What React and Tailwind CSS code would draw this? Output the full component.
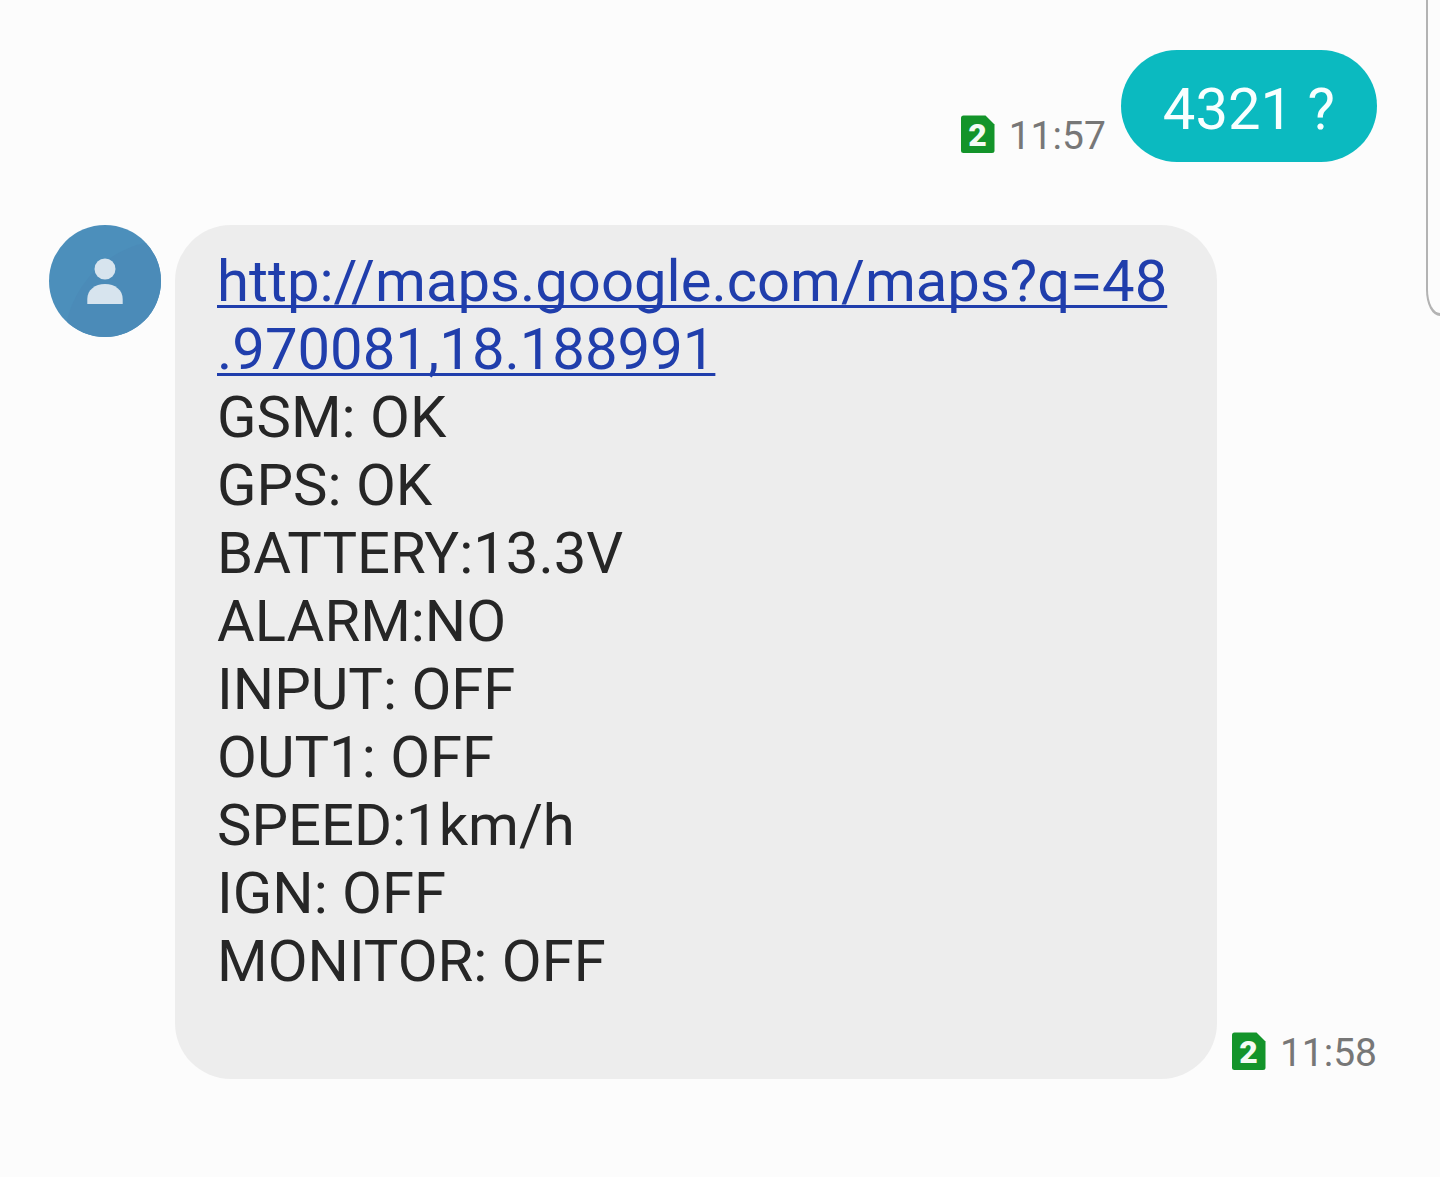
import React from "react";

const status = [
  "GSM: OK",
  "GPS: OK",
  "BATTERY:13.3V",
  "ALARM:NO",
  "INPUT: OFF",
  "OUT1: OFF",
  "SPEED:1km/h",
  "IGN: OFF",
  "MONITOR: OFF",
];

const SimIcon = () => (
  <svg width="34" height="38" viewBox="0 0 34 38" role="img" aria-label="SIM 2">
    <path d="M2.5 0.5H24.5L33.5 9.5V35.5Q33.5 38 31 38H2.5Q0 38 0 35.5V3Q0 0.5 2.5 0.5Z" fill="#13942a" />
    <text
      x="16.5"
      y="31"
      textAnchor="middle"
      fontSize="32"
      fontWeight="900"
      fill="#f4fbf4"
      className="font-['Roboto',sans-serif]"
    >
      2
    </text>
  </svg>
);

const Avatar = () => (
  <svg className="shrink-0" width="112" height="112" viewBox="0 0 112 112" role="img" aria-label="Contact">
    <clipPath id="avatar-clip">
      <circle cx="56" cy="56" r="56" />
    </clipPath>
    <g clipPath="url(#avatar-clip)">
      <rect width="112" height="112" fill="#4c8fbb" />
      <circle cx="120" cy="120" r="105" fill="#4b8bb8" />
    </g>
    <circle cx="56" cy="44" r="10.5" fill="#d7e4ee" />
    <path d="M38.3 79V74C38.3 65 46 59 56 59C66 59 73.7 65 73.7 74V79Z" fill="#d7e4ee" />
  </svg>
);

const Stamp = ({ time }) => (
  <div className="flex shrink-0 items-start gap-[14px] pb-[5px]">
    <SimIcon />
    <time className="text-[39px] leading-[42px] text-[#777777]">{time}</time>
  </div>
);

const App = () => {
  return (
    <main className="relative min-h-screen overflow-hidden bg-[#fcfcfc] pt-[50px] pr-[63px] pb-24 pl-[49px] font-['Roboto',sans-serif] text-[58px] leading-[68px]">
      {/* edge panel handle */}
      <div className="absolute top-0 right-0 h-[316px] w-[14px] rounded-bl-[14px_26px] border-b-3 border-l-2 border-[#b3b3b3]" />

      <section className="flex items-end justify-end gap-[15px]">
        <Stamp time="11:57" />
        <p className="rounded-full bg-[#0bbac0] px-[42px] pt-[25px] pb-[19px] text-[#f8ffff]">4321 ?</p>
      </section>

      <section className="mt-[63px] flex items-start gap-[14px]">
        <Avatar />
        <div className="flex grow items-end gap-[15px]">
          <div className="grow rounded-[56px] bg-[#ededed] px-[42px] pt-[22px] pb-[84px] text-[#262626]">
            <a
              href="http://maps.google.com/maps?q=48.970081,18.188991"
              className="text-[#203eac] underline decoration-[3px] underline-offset-4 [text-decoration-skip-ink:none]"
            >
              http://maps.google.com/maps?q=48
              <wbr />
              .970081,18.188991
            </a>
            <ul>
              {status.map((line) => (
                <li key={line}>{line}</li>
              ))}
            </ul>
          </div>
          <Stamp time="11:58" />
        </div>
      </section>
    </main>
  );
};

export default App;
